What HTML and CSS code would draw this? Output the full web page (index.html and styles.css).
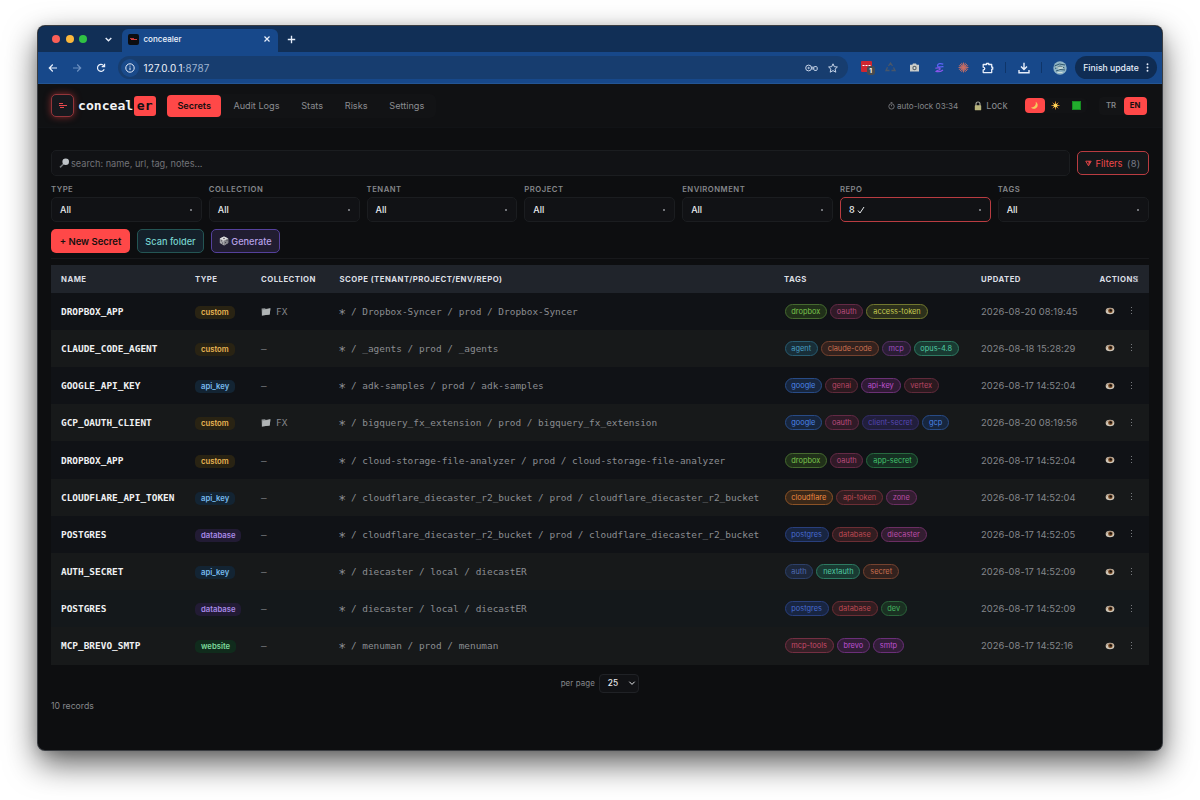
FILE: index.html
```html
<!DOCTYPE html>
<html lang="en">
<head>
<meta charset="utf-8">
<title>concealer</title>
<link rel="stylesheet" href="styles.css">
</head>
<body>
<svg class="defs" width="0" height="0">
  <symbol id="eye" viewBox="0 0 10 8"><ellipse cx="5" cy="4" rx="4.3" ry="3.2" fill="#cfc6b8"/><circle cx="5.4" cy="3.7" r="2.3" fill="#7a4a22"/><circle cx="5.8" cy="3.4" r="1.2" fill="#17110d"/><path d="M.8 3.6Q5-.8 9.2 3.6" fill="none" stroke="#a58a74" stroke-width=".8"/></symbol>
  <symbol id="folder" viewBox="0 0 10 9"><path d="M.6 1.6 4 1.2 4.8 2 9.4 1 8.7 7.6.9 8.4Z" fill="#8f9395"/><path d="M1.6 3 9.4 1.6 8.7 7.6.9 8.4Z" fill="#b0b4b5"/></symbol>
</svg>
<div class="window">
  <div class="tabstrip">
    <div class="lights"><i class="red"></i><i class="amber"></i><i class="go"></i></div>
    <svg class="chev" viewBox="0 0 8 8"><path d="M1.5 2.7 4 5.2 6.5 2.7"/></svg>
    <div class="tab">
      <svg class="favicon" viewBox="0 0 11 11"><rect width="11" height="11" rx="2" fill="#0c0d10"/><rect x="2" y="4" width="4" height="1" fill="#b5393a"/><rect x="3" y="5" width="6" height="1" fill="#d5403f"/></svg>
      <span>concealer</span>
      <svg class="x" viewBox="0 0 8 8"><path d="M1.5 1.5 6.5 6.5M6.5 1.5 1.5 6.5"/></svg>
    </div>
    <svg class="plus" viewBox="0 0 8 8"><path d="M4 .7v6.6M.7 4h6.6"/></svg>
  </div>
  <div class="toolbar">
    <div class="navicons">
      <svg viewBox="0 0 10 10"><path d="M9 5H1.5M4.800 1.5 1.3 5 4.800 8.5"/></svg>
      <svg class="dim" viewBox="0 0 10 10"><path d="M1 5h7.5M5.200 1.5 8.700 5 5.200 8.5"/></svg>
      <svg viewBox="0 0 10 10"><path d="M8.2 6.3A3.5 3.5 0 1 1 7.8 2.8M8.6.8V3.7H5.7"/></svg>
    </div>
    <div class="omnibox">
      <span class="info"><svg viewBox="0 0 10 10"><circle cx="5" cy="5" r="4.2"/><path d="M5 4.5v2.6M5 2.7v.9"/></svg></span>
      <span class="url">127.0.0.1<em>:8787</em></span>
      <svg class="key" viewBox="0 0 13 8"><circle cx="3.6" cy="4" r="2.9"/><circle cx="3.6" cy="4" r=".7"/><path d="M6.5 3.2H8.8M6.5 4.900H8.8"/><rect x="8.8" y="2.6" width="3.4" height="3.8" rx="1"/></svg>
      <svg class="star" viewBox="0 0 10 10"><path d="M5 .8 6.3 3.7 9.4 4 7.1 6.1 7.8 9.2 5 7.6 2.2 9.2 2.900 6.1.6 4 3.7 3.7Z"/></svg>
    </div>
    <div class="exts">
      <svg class="e1" viewBox="0 0 15 15"><rect x="1" y="1" width="11" height="11" rx="1" fill="#cf2630"/><path d="M2.5 5.5h2M5.5 5.5h2M8.5 5.5h2" stroke="#fff" stroke-width="1.1"/><rect x="7" y="6" width="8" height="9" rx="2.5" fill="#484b50"/><text x="9.3" y="13" class="badge">1</text></svg>
      <svg class="e2" viewBox="0 0 11 11"><path d="M3.5 4 5.5 1 7.5 4M8.5 5.5l1.5 3H6.5M4.5 8.5H1l1.5-3.3" fill="none" stroke="#48566a" stroke-width="1.3"/></svg>
      <svg class="e3" viewBox="0 0 11 11"><path d="M1 2.8h2.3l.7-1.3h3l.7 1.3H10v6.7H1Z" fill="#c9ccca"/><circle cx="5.5" cy="6" r="2.2" fill="#62686c"/><circle cx="5.5" cy="6" r="1" fill="#dce9e9"/></svg>
      <svg class="e4" viewBox="0 0 11 11"><path d="M9.3 2.3C6.5.8 3.5 1.8 3.5 3.7S6.5 5 9.5 4.6" fill="none" stroke="#5a63f5" stroke-width="1.3"/><path d="M1.3 6.3C3.5 5.5 6.8 5.8 6 7.2S2.5 8 2 9.5C4.5 10 7 9.6 9 8" fill="none" stroke="#8a55ea" stroke-width="1.2"/></svg>
      <svg class="e5" viewBox="0 0 11 11"><path d="M5.5.5v10M.5 5.5h10M2 2l7 7M9 2 2 9M3.5.9l4 9.2M7.5.9l-4 9.2M.9 3.5l9.2 4M.9 7.5l9.2-4" stroke="#c96e64" stroke-width=".9"/></svg>
      <svg class="e6" viewBox="0 0 12 12"><path d="M1.2 2.5H4.5V1.5h2.2v1H9.7V5.2h1v2h-1V10.6H1.2V8C3.3 7.700 3.3 5.500 1.2 5.200Z" fill="none" stroke="#e8effb" stroke-width="1.3" stroke-linejoin="round"/></svg>
      <b class="sep"></b>
      <svg class="e7" viewBox="0 0 12 12"><path d="M6 .8V7M3 4.500 6 7.500 9 4.500M1 8v2.800h10V8" fill="none" stroke="#e8effb" stroke-width="1.4"/></svg>
      <b class="sep"></b>
      <svg class="avatar" viewBox="0 0 14 14"><circle cx="7" cy="7" r="6.7" fill="#8fb4c6"/><path d="M1.5 5Q6 1.5 12 4M2 7.5l5-2.5 4.5 2M3 10l4-1.5 5 .5" fill="none" stroke="#31576b" stroke-width="1"/><path d="M3 6.2h7M5 8l5-1.2M4.5 11.5h5" stroke="#dfe9dc" stroke-width=".8"/></svg>
    </div>
    <div class="finish">Finish update<svg viewBox="0 0 3 9"><circle cx="1.5" cy="1.2" r=".95"/><circle cx="1.5" cy="4.5" r=".95"/><circle cx="1.5" cy="7.8" r=".95"/></svg></div>
  </div>
  <header class="apphead">
    <div class="logo"><svg viewBox="0 0 9 7"><rect x="1" y="1" width="4" height="1"/><rect x="1" y="3" width="8" height="1"/><rect x="2" y="5" width="4" height="1"/></svg></div>
    <div class="brand">conceal<span>er</span></div>
    <nav class="nav"><a class="on">Secrets</a><a>Audit Logs</a><a>Stats</a><a>Risks</a><a>Settings</a></nav>
    <div class="auto"><svg viewBox="0 0 7 8"><circle cx="3.5" cy="4.4" r="2.7"/><path d="M3.5 4.4V2.8M2.6.6h1.8"/></svg>auto-lock 03:34</div>
    <div class="lock"><svg viewBox="0 0 8 10"><path d="M2 5V3a2 2 0 0 1 4 0v2" fill="none" stroke="#a8aaa0" stroke-width="1.1"/><rect x=".8" y="4.3" width="6.4" height="5" rx=".6" fill="#b9b57c"/></svg>Lock</div>
    <div class="themes">
      <span class="on"><svg viewBox="0 0 10 10"><path d="M6.2.8A4.2 4.2 0 1 1 .9 7 4.7 4.7 0 0 0 6.2.8Z" fill="#f5c95c"/></svg></span>
      <span><svg viewBox="0 0 10 10"><path d="M5 .6v8.8M.6 5h8.800M1.900 1.900l6.200 6.200M8.100 1.900 1.900 8.100" stroke="#d98a28" stroke-width="1"/><circle cx="5" cy="5" r="2.3" fill="#fbd45a"/></svg></span>
      <span><i></i></span>
    </div>
    <div class="langs"><span>TR</span><span class="on">EN</span></div>
  </header>
  <main>
    <div class="searchrow">
      <div class="search"><svg viewBox="0 0 11 11"><path d="M1 9.3 4.5 6" stroke="#72777b" stroke-width="1.6"/><circle cx="6.7" cy="3.7" r="3.3" fill="#bfc4c8"/></svg>search: name, url, tag, notes...</div>
      <div class="filters"><svg viewBox="0 0 7 7"><path d="M.8 1.2h5.4L3.500 5.800Z" fill="none" stroke="#f0484b" stroke-width=".9"/><path d="M3.500 1v4.500l2-4Z" fill="#f0484b"/></svg><span>Filters</span><em>(8)</em></div>
    </div>
    <div class="selects">
      <label>TYPE<span>All<i></i></span></label>
      <label>COLLECTION<span>All<i></i></span></label>
      <label>TENANT<span>All<i></i></span></label>
      <label>PROJECT<span>All<i></i></span></label>
      <label>ENVIRONMENT<span>All<i></i></span></label>
      <label>REPO<span class="active">8 <svg viewBox="0 0 8 8"><path d="M1 4.5 3 7 7 1"/></svg><i></i></span></label>
      <label>TAGS<span>All<i></i></span></label>
    </div>
    <div class="actions">
      <div class="btn new">+ New Secret</div><div class="btn scan">Scan folder</div>
      <div class="btn gen"><svg viewBox="0 0 10 10"><path d="M5 .5 9.2 2.5V7L5 9.5.8 7V2.5Z" fill="#a9a9ad"/><path d="M5 .5 9.2 2.5 5 4.7.8 2.5Z" fill="#e0e0e0"/><path d="M5 4.7V9.5L9.2 7V2.5Z" fill="#85858b"/><g fill="#3b3340"><circle cx="5" cy="2.5" r=".7"/><circle cx="2.3" cy="4.8" r=".6"/><circle cx="3.6" cy="7" r=".6"/><circle cx="6.5" cy="6.5" r=".5"/><circle cx="8" cy="4.5" r=".5"/></g></svg>Generate</div>
    </div>
    <div class="table">
      <div class="row head"><span>NAME</span><span>TYPE</span><span>COLLECTION</span><span>SCOPE (TENANT/PROJECT/ENV/REPO)</span><span>TAGS</span><span>UPDATED</span><span class="acthead">ACTIONS<svg viewBox="0 0 6 8"><path d="M.8 1.500h4.400M.8 4h4.400M.8 6.500h4.400"/></svg></span></div>
      <div class="row"><b>DROPBOX_APP</b><span><u class="custom">custom</u></span><span class="coll"><svg><use href="#folder"/></svg>FX</span><span class="scope"><span class="any">∗</span> / Dropbox-Syncer / prod / Dropbox-Syncer</span><span class="tags"><i class="lime">dropbox</i><i class="pink">oauth</i><i class="yellow">access-token</i></span><time>2026-08-20 08:19:45</time><span class="acts"><svg><use href="#eye"/></svg><s></s></span></div>
      <div class="row alt"><b>CLAUDE_CODE_AGENT</b><span><u class="custom">custom</u></span><span class="coll">—</span><span class="scope"><span class="any">∗</span> / _agents / prod / _agents</span><span class="tags"><i class="cyan">agent</i><i class="rust">claude-code</i><i class="purple">mcp</i><i class="teal">opus-4.8</i></span><time>2026-08-18 15:28:29</time><span class="acts"><svg><use href="#eye"/></svg><s></s></span></div>
      <div class="row"><b>GOOGLE_API_KEY</b><span><u class="api">api_key</u></span><span class="coll">—</span><span class="scope"><span class="any">∗</span> / adk-samples / prod / adk-samples</span><span class="tags"><i class="blue">google</i><i class="rose">genai</i><i class="magenta">api-key</i><i class="rose">vertex</i></span><time>2026-08-17 14:52:04</time><span class="acts"><svg><use href="#eye"/></svg><s></s></span></div>
      <div class="row alt"><b>GCP_OAUTH_CLIENT</b><span><u class="custom">custom</u></span><span class="coll"><svg><use href="#folder"/></svg>FX</span><span class="scope"><span class="any">∗</span> / bigquery_fx_extension / prod / bigquery_fx_extension</span><span class="tags"><i class="blue">google</i><i class="pink">oauth</i><i class="indigo">client-secret</i><i class="blue">gcp</i></span><time>2026-08-20 08:19:56</time><span class="acts"><svg><use href="#eye"/></svg><s></s></span></div>
      <div class="row"><b>DROPBOX_APP</b><span><u class="custom">custom</u></span><span class="coll">—</span><span class="scope"><span class="any">∗</span> / cloud-storage-file-analyzer / prod / cloud-storage-file-analyzer</span><span class="tags"><i class="lime">dropbox</i><i class="pink">oauth</i><i class="green">app-secret</i></span><time>2026-08-17 14:52:04</time><span class="acts"><svg><use href="#eye"/></svg><s></s></span></div>
      <div class="row alt"><b>CLOUDFLARE_API_TOKEN</b><span><u class="api">api_key</u></span><span class="coll">—</span><span class="scope"><span class="any">∗</span> / cloudflare_diecaster_r2_bucket / prod / cloudflare_diecaster_r2_bucket</span><span class="tags"><i class="orange">cloudflare</i><i class="red">api-token</i><i class="fuchsia">zone</i></span><time>2026-08-17 14:52:04</time><span class="acts"><svg><use href="#eye"/></svg><s></s></span></div>
      <div class="row"><b>POSTGRES</b><span><u class="db">database</u></span><span class="coll">—</span><span class="scope"><span class="any">∗</span> / cloudflare_diecaster_r2_bucket / prod / cloudflare_diecaster_r2_bucket</span><span class="tags"><i class="royal">postgres</i><i class="red">database</i><i class="fuchsia">diecaster</i></span><time>2026-08-17 14:52:05</time><span class="acts"><svg><use href="#eye"/></svg><s></s></span></div>
      <div class="row alt"><b>AUTH_SECRET</b><span><u class="api">api_key</u></span><span class="coll">—</span><span class="scope"><span class="any">∗</span> / diecaster / local / diecastER</span><span class="tags"><i class="slate">auth</i><i class="teal">nextauth</i><i class="rust">secret</i></span><time>2026-08-17 14:52:09</time><span class="acts"><svg><use href="#eye"/></svg><s></s></span></div>
      <div class="row hover"><b>POSTGRES</b><span><u class="db">database</u></span><span class="coll">—</span><span class="scope"><span class="any">∗</span> / diecaster / local / diecastER</span><span class="tags"><i class="royal">postgres</i><i class="red">database</i><i class="forest">dev</i></span><time>2026-08-17 14:52:09</time><span class="acts"><svg><use href="#eye"/></svg><s></s></span></div>
      <div class="row alt"><b>MCP_BREVO_SMTP</b><span><u class="web">website</u></span><span class="coll">—</span><span class="scope"><span class="any">∗</span> / menuman / prod / menuman</span><span class="tags"><i class="crimson">mcp-tools</i><i class="violet">brevo</i><i class="violet">smtp</i></span><time>2026-08-17 14:52:16</time><span class="acts"><svg><use href="#eye"/></svg><s></s></span></div>
    </div>
    <div class="pager">per page<span>25<svg viewBox="0 0 8 8"><path d="M1.3 2.7 4 5.4 6.7 2.7"/></svg></span></div>
    <div class="records">10 records</div>
  </main>
</div>
</body>
</html>
```
FILE: styles.css
```css
* { box-sizing: border-box; }
body { margin: 0; width: 1200px; height: 800px; overflow: hidden; background: #fff; padding: 26px 38px; font-family: Inter, "Liberation Sans", sans-serif; color: #e8eaed; }
svg { display: block; flex: none; }
em, i { font-style: normal; }
.defs { position: absolute; }
.window { width: 1124px; height: 724px; border-radius: 7px; overflow: hidden; background: #0d0e10; box-shadow: 0 0 0 1px #3a3d42, 0 13px 32px rgba(0,0,0,.65), 0 2px 12px rgba(0,0,0,.12); }

/* browser chrome */
.tabstrip { height: 26px; background: #112f56; display: flex; align-items: center; padding-left: 14px; }
.lights { display: flex; gap: 5.5px; width: 52px; }
.lights i { width: 8px; height: 8px; border-radius: 50%; }
.lights .red { background: #fb5f57; }
.lights .amber { background: #fbb83c; }
.lights .go { background: #30c244; }
.tabstrip svg, .toolbar .navicons svg, .omnibox svg { fill: none; stroke: #e8effb; stroke-width: 1.2; }
.chev { width: 9px; height: 9px; }
.tab { width: 156px; height: 23px; margin: 3px 0 0 9px; padding: 0 7px 3px 6px; background: #17488a; border-radius: 6px 6px 0 0; display: flex; align-items: center; font-size: 8px; font-weight: 500; color: #f0f5fd; }
.tabstrip .favicon { width: 11px; height: 11px; margin-right: 4.5px; stroke: none; }
.x { width: 8px; height: 8px; margin-left: auto; }
.plus { width: 9px; height: 9px; margin-left: 9px; }
.toolbar { height: 32px; background: #17488a; border-bottom: 1px solid #235594; display: flex; align-items: center; }
.navicons { display: flex; gap: 14px; margin-left: 10px; }
.navicons svg { width: 10px; height: 10px; }
.toolbar .navicons .dim { stroke: #6b8fc0; }
.omnibox { width: 730px; height: 23px; margin-left: 12px; padding: 0 10px 0 3px; background: #173d6f; border-radius: 12px; display: flex; align-items: center; }
.info { width: 18px; height: 18px; border-radius: 50%; background: #1a4a8a; display: flex; align-items: center; justify-content: center; }
.info svg { width: 10px; height: 10px; stroke-width: 1; }
.url { font-size: 9.9px; margin-left: 4.5px; color: #edf3fc; letter-spacing: .17px; }
.url em { color: #9fb4d1; }
.omnibox .key { width: 13px; height: 8px; margin-left: auto; stroke: #c9d6ea; stroke-width: 1; }
.omnibox .star { width: 10px; height: 10px; margin-left: 10px; stroke: #c9d6ea; stroke-width: 1; }
.exts { display: flex; align-items: center; margin-left: 12px; }
.e1 { width: 15px; height: 15px; }
.badge { font-size: 6.5px; font-weight: 700; fill: #fff; }
.e2, .e3, .e4, .e5 { width: 11px; height: 11px; }
.e2 { margin-left: 9.5px; }
.e3, .e4, .e5 { margin-left: 13.5px; }
.e6 { width: 12px; height: 12px; margin-left: 13px; }
.sep { width: 1px; height: 11px; background: #0f3569; margin-left: 11px; }
.e7 { width: 12px; height: 12px; margin-left: 12px; }
.avatar { width: 14px; height: 14px; margin-left: 11px; }
.finish { width: 82px; height: 23px; margin-left: 8px; border-radius: 12px; background: #0f2c53; font-size: 8.65px; font-weight: 500; color: #e6eefb; display: flex; align-items: center; justify-content: center; gap: 7px; white-space: nowrap; }
.finish svg { width: 3px; height: 9px; fill: #e6eefb; }

/* app header */
.apphead { height: 44px; background: #101113; display: flex; align-items: center; padding: 0 15.5px 0 12.5px; border-bottom: 1px solid #111316; }
.logo { width: 23px; height: 23px; border: 1px solid #93353a; border-radius: 5px; background: #17191e; box-shadow: 0 0 7px rgba(255,70,72,.5); display: flex; align-items: center; justify-content: center; }
.logo svg { width: 9px; height: 7px; fill: #e8484d; }
.brand { font: 700 13.1px "DejaVu Sans Mono", monospace; color: #f2f3f5; margin-left: 4.5px; display: flex; align-items: center; }
.brand span { height: 20px; line-height: 20px; width: 22px; text-align: center; margin-left: .5px; background: #ff4848; color: #101113; border-radius: 3px; }
.nav { display: flex; margin-left: 10.5px; height: 24px; align-items: center; background: #121315; border-radius: 6px; padding: 0 1px; font-size: 9.15px; color: #8b8d91; }
.nav a { height: 22px; line-height: 22px; padding: 0 10.9px; }
.nav .on { width: 54px; text-align: center; background: #ff4848; color: #17100f; font-weight: 600; border-radius: 4px; padding: 0; margin-right: 1.3px; }
.auto { margin-left: auto; display: flex; align-items: center; gap: 1.5px; font-size: 8.1px; color: #85878b; }
.auto svg { width: 7px; height: 8px; fill: none; stroke: #85878b; stroke-width: .8; }
.lock { display: flex; align-items: center; gap: 4px; margin-left: 16px; font-size: 9.3px; color: #8b8d91; }
.lock svg { width: 8px; height: 10px; }
.themes { display: flex; margin-left: 17px; background: #121315; border-radius: 5px; }
.themes span { width: 21px; height: 15px; display: flex; align-items: center; justify-content: center; border-radius: 4px; }
.themes .on { width: 20px; background: #ff4848; }
.themes svg { width: 9px; height: 9px; }
.themes i { width: 9px; height: 9px; background: #22ad2d; border: 1px solid #168b22; }
.langs { display: flex; margin-left: 12px; height: 18px; background: #131416; border-radius: 4px; font-size: 7.7px; font-weight: 600; color: #85878b; line-height: 18px; }
.langs span { width: 25px; text-align: center; }
.langs .on { width: 23px; background: #ff4848; color: #17100f; font-weight: 700; border-radius: 4px; }

/* filters */
main { padding: 22px 13.5px 0 13px; }
.searchrow { display: flex; align-items: center; gap: 7px; }
.search { flex: 1; height: 26px; border: 1px solid #1b1d20; background: #111215; border-radius: 5px; padding-left: 7px; display: flex; align-items: center; gap: 1px; font-size: 9.2px; color: #717378; }
.search svg { width: 11px; height: 11px; }
.filters { width: 72px; height: 24px; border: 1px solid #b93c41; border-radius: 5px; background: #14171a; display: flex; align-items: center; justify-content: center; font-size: 9.3px; color: #f0484b; }
.filters svg { width: 7px; height: 7px; margin-right: 4px; }
.filters em { color: #777c87; margin-left: 4.5px; letter-spacing: .3px; }
.selects { display: grid; grid-template-columns: repeat(7, 1fr); gap: 7px; margin-top: 8px; }
.selects label { font-size: 7.7px; font-weight: 600; line-height: 11px; letter-spacing: .5px; color: #85878b; }
.selects span { display: flex; align-items: center; height: 25px; margin-top: 2px; border: 1px solid #1b1d20; border-radius: 5px; background: #111215; padding: 0 9px 0 8px; font-size: 9px; font-weight: 500; letter-spacing: 0; color: #e8eaed; }
.selects span.active { border-color: #b93c41; }
.selects i { width: 2px; height: 2px; border-radius: 1px; background: #92959a; margin-left: auto; }
.selects svg { width: 8px; height: 8px; margin-left: 2.5px; fill: none; stroke: #e8eaed; stroke-width: 1; }
.actions { display: flex; gap: 7px; padding: 7px 0 5px; border-bottom: 1px solid #18191c; }
.btn { height: 24px; border-radius: 5px; font-size: 9.2px; font-weight: 500; display: flex; align-items: center; justify-content: center; white-space: nowrap; }
.new { width: 79px; background: #ff4848; color: #17100f; font-weight: 600; font-size: 9.5px; }
.scan { width: 67px; background: #14202a; border: 1px solid #245554; color: #77d3cd; }
.gen { width: 69px; background: #211d31; border: 1px solid #55419c; color: #b7a1e8; gap: 2px; }
.gen svg { width: 10px; height: 10px; }

/* secrets table */
.table { margin-top: 5.7px; }
.row { height: 37.2px; display: grid; grid-template-columns: 134px 66px 78.5px 444.5px 197px 118.5px 1fr; align-items: center; padding-left: 10px; background: #101216; font-size: 9.4px; color: #85878b; white-space: nowrap; }
.row.alt { background: #17191a; }
.row.hover { background: #14181b; }
.row.head { height: 28px; background: #20242b; color: #dcdfe4; font-size: 7.75px; font-weight: 700; letter-spacing: .48px; }
.acthead { display: flex; align-items: center; }
.acthead svg { width: 6px; height: 8px; margin-left: -5px; fill: none; stroke: #969ba3; stroke-width: .8; }
.row b { font: 700 9.43px "DejaVu Sans Mono", monospace; color: #eff0f2; }
.row u { display: inline-block; text-decoration: none; height: 13px; line-height: 13px; padding: 0 6px; border-radius: 5px; font-size: 7.7px; font-weight: 600; vertical-align: middle; margin-top: 2px; }
.custom { background: #292313; color: #e9b653; }
.api { background: #132433; color: #78bcf0; }
.db { background: #221b34; color: #a98ae8; }
.web { background: #102b1c; color: #7edb9d; }
.coll, .scope { font-family: "DejaVu Sans Mono", monospace; }
.coll { display: flex; align-items: center; font-size: 9.4px; }
.coll svg { width: 10px; height: 9px; margin-right: 5px; }
.scope { font-size: 9.43px; color: #8b8d91; }
.any { font-size: 13px; line-height: 0; margin: 0 -1.07px; vertical-align: -1px; }
.tags { display: flex; gap: 3px; padding-left: .5px; }
.tags i { height: 15px; line-height: 13px; padding: 0 5.8px; border-width: 1px; border-style: solid; border-radius: 8px; font-size: 7.4px; }
.lime { background: #203019; border-color: #45692f; color: #7ac44d; }
.pink { background: #301a27; border-color: #632a45; color: #b84b7c; }
.yellow { background: #2c301b; border-color: #71772f; color: #c5ca52; }
.cyan { background: #182e38; border-color: #285b70; color: #489fc2; }
.rust { background: #33221e; border-color: #74422f; color: #c8704f; }
.purple { background: #2a1d34; border-color: #563066; color: #a04fc1; }
.teal { background: #193a32; border-color: #2d7961; color: #50caa2; }
.blue { background: #17263e; border-color: #284b86; color: #4b85e8; }
.rose { background: #2b191f; border-color: #602a3b; color: #b84564; }
.magenta { background: #301a35; border-color: #6b3175; color: #bd50cc; }
.indigo { background: #211e3c; border-color: #332d67; color: #5546b2; }
.green { background: #152f22; border-color: #27693f; color: #43c16d; }
.orange { background: #3a2819; border-color: #8b5226; color: #ee8a40; }
.red { background: #321d21; border-color: #6c2e35; color: #bd4953; }
.fuchsia { background: #331d31; border-color: #6b2e62; color: #bd4da9; }
.royal { background: #182541; border-color: #293f7d; color: #476acd; }
.slate { background: #1d273b; border-color: #2d4069; color: #4e6ab1; }
.forest { background: #1a3022; border-color: #2a633a; color: #43b560; }
.crimson { background: #351f26; border-color: #742f43; color: #c44a68; }
.violet { background: #321d38; border-color: #6b2f79; color: #bd50d2; }
.row time { font-size: 9.4px; letter-spacing: .03px; }
.acts { display: flex; align-items: center; padding-left: 5px; }
.acts svg { width: 10px; height: 8px; }
.acts s { width: 1px; height: 8px; margin-left: 16px; background: repeating-linear-gradient(#777a7e 0 1px, transparent 1px 3px); }

.pager { display: flex; justify-content: center; align-items: center; gap: 4px; margin-top: 9.3px; font-size: 7.9px; color: #85878b; letter-spacing: .1px; }
.pager span { width: 40px; height: 19px; border: 1px solid #202226; border-radius: 4px; background: #111215; display: flex; align-items: center; justify-content: space-between; padding: 0 2px 0 8px; color: #e8eaed; font-size: 8.3px; font-weight: 500; }
.pager svg { width: 8px; height: 8px; fill: none; stroke: #e8eaed; stroke-width: 1; }
.records { margin-top: 7px; font-size: 8.7px; line-height: 12px; color: #85878b; }
```
